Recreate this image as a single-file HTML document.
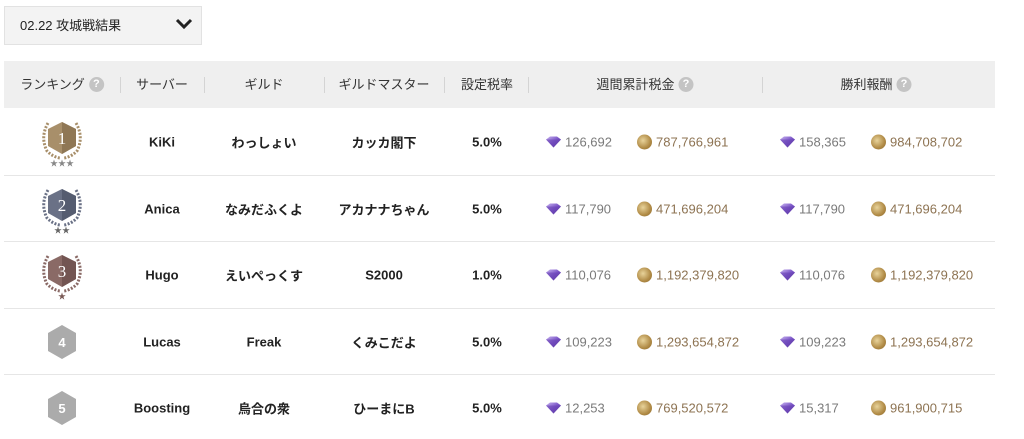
<!DOCTYPE html>
<html><head><meta charset="utf-8"><style>
*{margin:0;padding:0;box-sizing:border-box}
body{width:1024px;height:439px;background:#fff;font-family:"Liberation Sans","Noto Sans CJK JP",sans-serif;position:relative;overflow:hidden;color:#222}
.dd{position:absolute;left:4px;top:6px;width:198px;height:39px;background:#f3f3f3;border:1px solid #e2e2e2;font-size:13px;line-height:37px;padding-left:15px;color:#222}
.dd svg{position:absolute;right:8px;top:11px}
.hd{position:absolute;left:4px;top:61px;width:991px;height:47px;background:#efefef}
.h{position:absolute;top:61px;height:47px;line-height:47px;font-size:13px;color:#333;transform:translateX(-50%);white-space:nowrap}
.sep{position:absolute;top:77px;width:1px;height:16px;background:#d4d4d4}
.q{display:inline-block;width:15px;height:15px;border-radius:50%;background:#c4c4c4;color:#fff;font-size:11px;line-height:15px;text-align:center;vertical-align:middle;margin-left:4px;margin-top:-3px;font-weight:bold}
.line{position:absolute;left:4px;width:991px;height:1px;background:#e6e6e6}
.c{position:absolute;transform:translate(-50%,-50%);font-size:13px;font-weight:bold;color:#222;white-space:nowrap}
.n{position:absolute;transform:translateY(-50%);font-size:13px;white-space:nowrap}
.g{color:#7a7a7a}.k{color:#8d7352}
.gem{position:absolute;width:17px;height:13px;transform:translateY(-50%)}
.coin{position:absolute;width:15px;height:15px;border-radius:50%;transform:translateY(-50%);background:radial-gradient(circle at 40% 40%,#e8d39a,#b08a45 60%,#8a6a30)}
.hex{position:absolute;transform:translate(-50%,-50%)}
</style></head><body>
<div class="dd">02.22 攻城戦結果<svg width="18" height="12" viewBox="0 0 18 12"><path d="M2 2 L9 9 L16 2" stroke="#222" stroke-width="3" fill="none"/></svg></div>
<div class="hd"></div>
<div class="h" style="left:62px">ランキング<span class="q">?</span></div>
<div class="h" style="left:162px">サーバー</div>
<div class="h" style="left:264px">ギルド</div>
<div class="h" style="left:384px">ギルドマスター</div>
<div class="h" style="left:487px">設定税率</div>
<div class="h" style="left:645px">週間累計税金<span class="q">?</span></div>
<div class="h" style="left:876px">勝利報酬<span class="q">?</span></div>
<div class="sep" style="left:120px"></div><div class="sep" style="left:204px"></div><div class="sep" style="left:324px"></div><div class="sep" style="left:444px"></div><div class="sep" style="left:528px"></div><div class="sep" style="left:762px"></div>
<div class="line" style="top:175px"></div><div class="line" style="top:241px"></div><div class="line" style="top:308px"></div><div class="line" style="top:374px"></div>

<svg class="hex" style="left:62px;top:142px" width="48" height="50" viewBox="0 0 48 50"><g fill="none" stroke="#a88f6a" stroke-width="3" stroke-dasharray="2 1.5"><path d="M10 6 Q2 20 9 34 Q15 40 22 41"/><path d="M38 6 Q46 20 39 34 Q33 40 26 41"/></g><path d="M24 5 L38 12 L38 29 L24 37 L10 29 L10 12Z" fill="#a88f6a"/><path d="M24 5 L38 12 L38 29 L24 37Z" fill="#8f7755"/><text x="24" y="27" font-family="Liberation Serif,serif" font-size="17" fill="#fff" text-anchor="middle">1</text><text x="24" y="49" font-size="8" fill="#888" text-anchor="middle">★★★</text></svg>
<svg class="hex" style="left:62px;top:209px" width="48" height="50" viewBox="0 0 48 50"><g fill="none" stroke="#6a7186" stroke-width="3" stroke-dasharray="2 1.5"><path d="M10 6 Q2 20 9 34 Q15 40 22 41"/><path d="M38 6 Q46 20 39 34 Q33 40 26 41"/></g><path d="M24 5 L38 12 L38 29 L24 37 L10 29 L10 12Z" fill="#6a7186"/><path d="M24 5 L38 12 L38 29 L24 37Z" fill="#555c70"/><text x="24" y="27" font-family="Liberation Serif,serif" font-size="17" fill="#fff" text-anchor="middle">2</text><text x="24" y="49" font-size="8" fill="#666" text-anchor="middle">★★</text></svg>
<svg class="hex" style="left:62px;top:275px" width="48" height="50" viewBox="0 0 48 50"><g fill="none" stroke="#8a6a66" stroke-width="3" stroke-dasharray="2 1.5"><path d="M10 6 Q2 20 9 34 Q15 40 22 41"/><path d="M38 6 Q46 20 39 34 Q33 40 26 41"/></g><path d="M24 5 L38 12 L38 29 L24 37 L10 29 L10 12Z" fill="#8a6a66"/><path d="M24 5 L38 12 L38 29 L24 37Z" fill="#735552"/><text x="24" y="27" font-family="Liberation Serif,serif" font-size="17" fill="#fff" text-anchor="middle">3</text><text x="24" y="49" font-size="8" fill="#7a5a56" text-anchor="middle">★</text></svg>
<svg class="hex" style="left:62px;top:342px" width="32" height="36" viewBox="0 0 32 36"><path d="M16 1 L30 9 L30 27 L16 35 L2 27 L2 9Z" fill="#ababab"/><text x="16" y="23" font-size="13" font-weight="bold" fill="#fff" text-anchor="middle">4</text></svg>
<svg class="hex" style="left:62px;top:408px" width="32" height="36" viewBox="0 0 32 36"><path d="M16 1 L30 9 L30 27 L16 35 L2 27 L2 9Z" fill="#ababab"/><text x="16" y="23" font-size="13" font-weight="bold" fill="#fff" text-anchor="middle">5</text></svg>

<div class="c" style="left:162px;top:142px">KiKi</div><div class="c" style="left:264px;top:142px">わっしょい</div><div class="c" style="left:384px;top:142px">カッカ閣下</div><div class="c" style="left:487px;top:142px">5.0%</div>
<div class="c" style="left:162px;top:209px">Anica</div><div class="c" style="left:264px;top:209px">なみだふくよ</div><div class="c" style="left:384px;top:209px">アカナナちゃん</div><div class="c" style="left:487px;top:209px">5.0%</div>
<div class="c" style="left:162px;top:275px">Hugo</div><div class="c" style="left:264px;top:275px">えいぺっくす</div><div class="c" style="left:384px;top:275px">S2000</div><div class="c" style="left:487px;top:275px">1.0%</div>
<div class="c" style="left:162px;top:342px">Lucas</div><div class="c" style="left:264px;top:342px">Freak</div><div class="c" style="left:384px;top:342px">くみこだよ</div><div class="c" style="left:487px;top:342px">5.0%</div>
<div class="c" style="left:162px;top:408px">Boosting</div><div class="c" style="left:264px;top:408px">烏合の衆</div><div class="c" style="left:384px;top:408px">ひーまにB</div><div class="c" style="left:487px;top:408px">5.0%</div>

<svg width="0" height="0" style="position:absolute"><defs><linearGradient id="gg" x1="0" y1="0" x2="1" y2="1"><stop offset="0" stop-color="#c9b5f0"/><stop offset="0.5" stop-color="#7b55c7"/><stop offset="1" stop-color="#4a2d8a"/></linearGradient></defs></svg>
<div id="vals"></div>
<script>
var rows=[[142,"126,692","787,766,961","158,365","984,708,702"],[209,"117,790","471,696,204","117,790","471,696,204"],[275,"110,076","1,192,379,820","110,076","1,192,379,820"],[342,"109,223","1,293,654,872","109,223","1,293,654,872"],[408,"12,253","769,520,572","15,317","961,900,715"]];
var gem='<svg viewBox="0 0 17 13" width="17" height="13"><path d="M1 4 L5 1 L12 1 L16 4 L8.5 12Z" fill="url(#gg)"/><path d="M1 4 L16 4 L8.5 12Z" fill="#6a45b5" opacity=".6"/></svg>';
var h='';rows.forEach(function(r){var y=r[0];
h+='<div class="gem" style="left:545px;top:'+y+'px">'+gem+'</div><div class="n g" style="left:565px;top:'+y+'px">'+r[1]+'</div>';
h+='<div class="coin" style="left:637px;top:'+y+'px"></div><div class="n k" style="left:656px;top:'+y+'px">'+r[2]+'</div>';
h+='<div class="gem" style="left:779px;top:'+y+'px">'+gem+'</div><div class="n g" style="left:799px;top:'+y+'px">'+r[3]+'</div>';
h+='<div class="coin" style="left:871px;top:'+y+'px"></div><div class="n k" style="left:890px;top:'+y+'px">'+r[4]+'</div>';});
document.getElementById('vals').innerHTML=h;
</script>
</body></html>
